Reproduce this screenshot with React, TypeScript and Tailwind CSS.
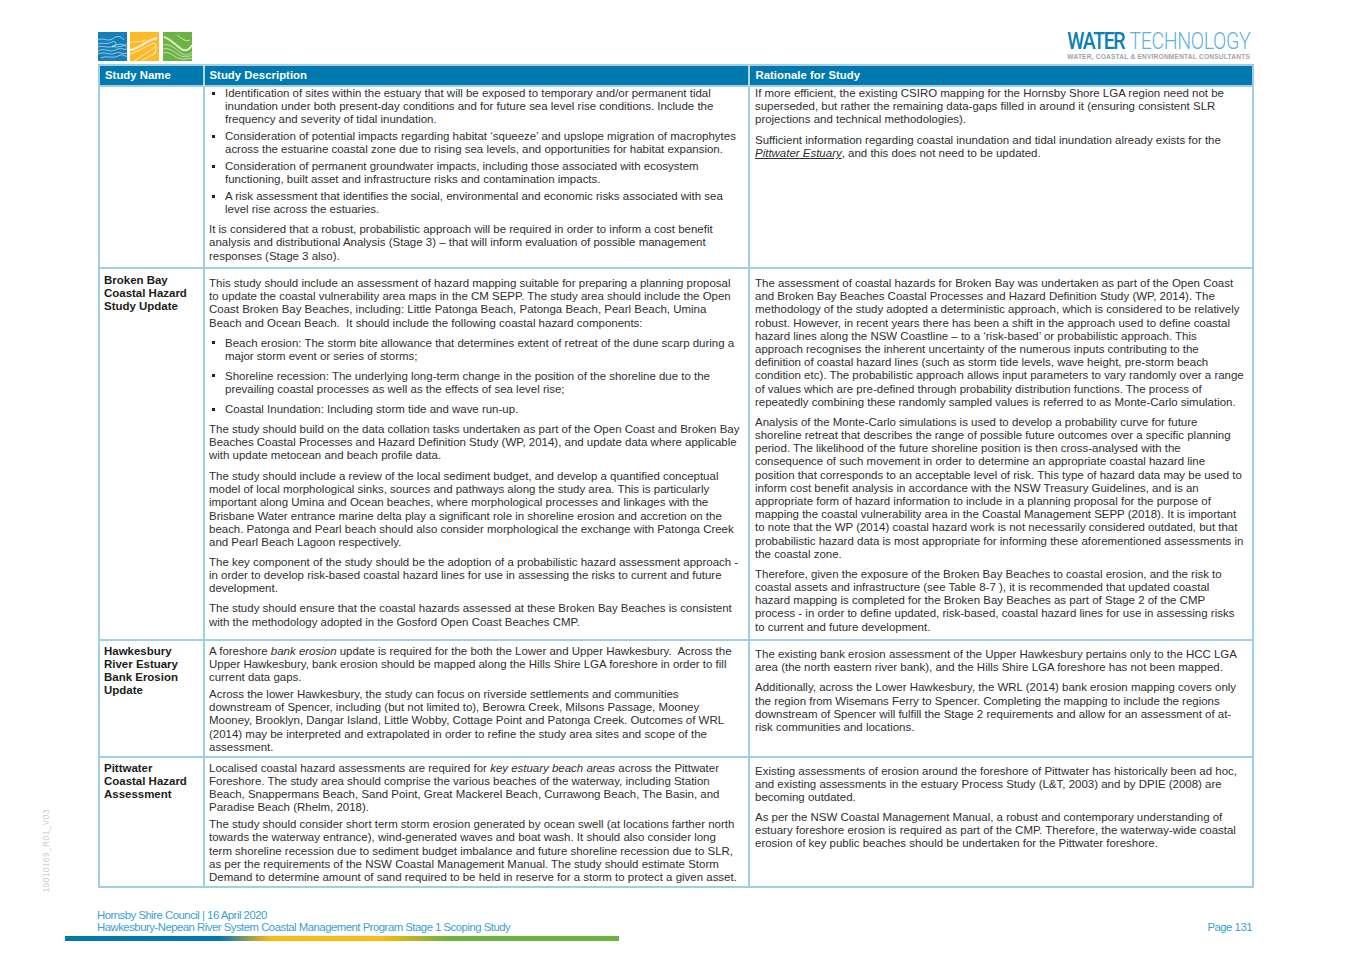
type Block = { lines: React.ReactNode[]; bullet?: boolean; gap?: string };

import React from "react";

const rows: { name: string[]; nameClass: string; descClass: string; ratClass: string; rowClass: string; desc: Block[]; rat: Block[] }[] = [
  {
    name: [],
    nameClass: "pt-[5px]",
    descClass: "pt-[0px]",
    ratClass: "pt-[0px]",
    rowClass: "h-[182px]",
    desc: [
      {
        bullet: true,
        lines: [
          "Identification of sites within the estuary that will be exposed to temporary and/or permanent tidal",
          "inundation under both present-day conditions and for future sea level rise conditions. Include the",
          "frequency and severity of tidal inundation.",
        ],
      },
      {
        bullet: true,
        gap: "mt-[3.6px]",
        lines: [
          "Consideration of potential impacts regarding habitat ‘squeeze’ and upslope migration of macrophytes",
          "across the estuarine coastal zone due to rising sea levels, and opportunities for habitat expansion.",
        ],
      },
      {
        bullet: true,
        gap: "mt-[3.4px]",
        lines: [
          "Consideration of permanent groundwater impacts, including those associated with ecosystem",
          "functioning, built asset and infrastructure risks and contamination impacts.",
        ],
      },
      {
        bullet: true,
        gap: "mt-[3.6px]",
        lines: [
          "A risk assessment that identifies the social, environmental and economic risks associated with sea",
          "level rise across the estuaries.",
        ],
      },
      {
        gap: "mt-[6.8px]",
        lines: [
          "It is considered that a robust, probabilistic approach will be required in order to inform a cost benefit",
          "analysis and distributional Analysis (Stage 3) – that will inform evaluation of possible management",
          "responses (Stage 3 also).",
        ],
      },
    ],
    rat: [
      {
        lines: [
          "If more efficient, the existing CSIRO mapping for the Hornsby Shore LGA region need not be",
          "superseded, but rather the remaining data-gaps filled in around it (ensuring consistent SLR",
          "projections and technical methodologies).",
        ],
      },
      {
        gap: "mt-[7.4px]",
        lines: [
          "Sufficient information regarding coastal inundation and tidal inundation already exists for the",
          <>
            <span className="italic underline">Pittwater Estuary</span>, and this does not need to be updated.
          </>,
        ],
      },
    ],
  },
  {
    name: ["Broken Bay", "Coastal Hazard", "Study Update"],
    nameClass: "pt-[4.6px]",
    descClass: "pt-[8px]",
    ratClass: "pt-[8px]",
    rowClass: "h-[372px]",
    desc: [
      {
        lines: [
          "This study should include an assessment of hazard mapping suitable for preparing a planning proposal",
          "to update the coastal vulnerability area maps in the CM SEPP. The study area should include the Open",
          "Coast Broken Bay Beaches, including: Little Patonga Beach, Patonga Beach, Pearl Beach, Umina",
          "Beach and Ocean Beach.  It should include the following coastal hazard components:",
        ],
      },
      {
        bullet: true,
        gap: "mt-[6.8px]",
        lines: [
          "Beach erosion: The storm bite allowance that determines extent of retreat of the dune scarp during a",
          "major storm event or series of storms;",
        ],
      },
      {
        bullet: true,
        gap: "mt-[6.8px]",
        lines: [
          "Shoreline recession: The underlying long-term change in the position of the shoreline due to the",
          "prevailing coastal processes as well as the effects of sea level rise;",
        ],
      },
      { bullet: true, gap: "mt-[6.8px]", lines: ["Coastal Inundation: Including storm tide and wave run-up."] },
      {
        gap: "mt-[6.8px]",
        lines: [
          "The study should build on the data collation tasks undertaken as part of the Open Coast and Broken Bay",
          "Beaches Coastal Processes and Hazard Definition Study (WP, 2014), and update data where applicable",
          "with update metocean and beach profile data.",
        ],
      },
      {
        gap: "mt-[7.4px]",
        lines: [
          "The study should include a review of the local sediment budget, and develop a quantified conceptual",
          "model of local morphological sinks, sources and pathways along the study area. This is particularly",
          "important along Umina and Ocean beaches, where morphological processes and linkages with the",
          "Brisbane Water entrance marine delta play a significant role in shoreline erosion and accretion on the",
          "beach. Patonga and Pearl beach should also consider morphological the exchange with Patonga Creek",
          "and Pearl Beach Lagoon respectively.",
        ],
      },
      {
        gap: "mt-[6.8px]",
        lines: [
          "The key component of the study should be the adoption of a probabilistic hazard assessment approach -",
          "in order to develop risk-based coastal hazard lines for use in assessing the risks to current and future",
          "development.",
        ],
      },
      {
        gap: "mt-[6.8px]",
        lines: [
          "The study should ensure that the coastal hazards assessed at these Broken Bay Beaches is consistent",
          "with the methodology adopted in the Gosford Open Coast Beaches CMP.",
        ],
      },
    ],
    rat: [
      {
        lines: [
          "The assessment of coastal hazards for Broken Bay was undertaken as part of the Open Coast",
          "and Broken Bay Beaches Coastal Processes and Hazard Definition Study (WP, 2014). The",
          "methodology of the study adopted a deterministic approach, which is considered to be relatively",
          "robust. However, in recent years there has been a shift in the approach used to define coastal",
          "hazard lines along the NSW Coastline – to a ‘risk-based’ or probabilistic approach. This",
          "approach recognises the inherent uncertainty of the numerous inputs contributing to the",
          "definition of coastal hazard lines (such as storm tide levels, wave height, pre-storm beach",
          "condition etc). The probabilistic approach allows input parameters to vary randomly over a range",
          "of values which are pre-defined through probability distribution functions. The process of",
          "repeatedly combining these randomly sampled values is referred to as Monte-Carlo simulation.",
        ],
      },
      {
        gap: "mt-[6.8px]",
        lines: [
          "Analysis of the Monte-Carlo simulations is used to develop a probability curve for future",
          "shoreline retreat that describes the range of possible future outcomes over a specific planning",
          "period. The likelihood of the future shoreline position is then cross-analysed with the",
          "consequence of such movement in order to determine an appropriate coastal hazard line",
          "position that corresponds to an acceptable level of risk. This type of hazard data may be used to",
          "inform cost benefit analysis in accordance with the NSW Treasury Guidelines, and is an",
          "appropriate form of hazard information to include in a planning proposal for the purpose of",
          "mapping the coastal vulnerability area in the Coastal Management SEPP (2018). It is important",
          "to note that the WP (2014) coastal hazard work is not necessarily considered outdated, but that",
          "probabilistic hazard data is most appropriate for informing these aforementioned assessments in",
          "the coastal zone.",
        ],
      },
      {
        gap: "mt-[6.8px]",
        lines: [
          "Therefore, given the exposure of the Broken Bay Beaches to coastal erosion, and the risk to",
          "coastal assets and infrastructure (see Table 8-7 ), it is recommended that updated coastal",
          "hazard mapping is completed for the Broken Bay Beaches as part of Stage 2 of the CMP",
          "process - in order to define updated, risk-based, coastal hazard lines for use in assessing risks",
          "to current and future development.",
        ],
      },
    ],
  },
  {
    name: ["Hawkesbury", "River Estuary", "Bank Erosion", "Update"],
    nameClass: "pt-[3.5px]",
    descClass: "pt-[3.5px]",
    ratClass: "pt-[6.5px]",
    rowClass: "h-[117px]",
    desc: [
      {
        lines: [
          <>
            A foreshore <span className="italic">bank erosion</span> update is required for the both the Lower and Upper Hawkesbury.  Across the
          </>,
          "Upper Hawkesbury, bank erosion should be mapped along the Hills Shire LGA foreshore in order to fill",
          "current data gaps.",
        ],
      },
      {
        gap: "mt-[3.8px]",
        lines: [
          "Across the lower Hawkesbury, the study can focus on riverside settlements and communities",
          "downstream of Spencer, including (but not limited to), Berowra Creek, Milsons Passage, Mooney",
          "Mooney, Brooklyn, Dangar Island, Little Wobby, Cottage Point and Patonga Creek. Outcomes of WRL",
          "(2014) may be interpreted and extrapolated in order to refine the study area sites and scope of the",
          "assessment.",
        ],
      },
    ],
    rat: [
      {
        lines: [
          "The existing bank erosion assessment of the Upper Hawkesbury pertains only to the HCC LGA",
          "area (the north eastern river bank), and the Hills Shire LGA foreshore has not been mapped.",
        ],
      },
      {
        gap: "mt-[7.4px]",
        lines: [
          "Additionally, across the Lower Hawkesbury, the WRL (2014) bank erosion mapping covers only",
          "the region from Wisemans Ferry to Spencer. Completing the mapping to include the regions",
          "downstream of Spencer will fulfill the Stage 2 requirements and allow for an assessment of at-",
          "risk communities and locations.",
        ],
      },
    ],
  },
  {
    name: ["Pittwater", "Coastal Hazard", "Assessment"],
    nameClass: "pt-[3.5px]",
    descClass: "pt-[3.5px]",
    ratClass: "pt-[6.5px]",
    rowClass: "h-[130px]",
    desc: [
      {
        lines: [
          <>
            Localised coastal hazard assessments are required for <span className="italic">key estuary beach areas</span> across the Pittwater
          </>,
          "Foreshore. The study area should comprise the various beaches of the waterway, including Station",
          "Beach, Snappermans Beach, Sand Point, Great Mackerel Beach, Currawong Beach, The Basin, and",
          "Paradise Beach (Rhelm, 2018).",
        ],
      },
      {
        gap: "mt-[3.8px]",
        lines: [
          "The study should consider short term storm erosion generated by ocean swell (at locations farther north",
          "towards the waterway entrance), wind-generated waves and boat wash. It should also consider long",
          "term shoreline recession due to sediment budget imbalance and future shoreline recession due to SLR,",
          "as per the requirements of the NSW Coastal Management Manual. The study should estimate Storm",
          "Demand to determine amount of sand required to be held in reserve for a storm to protect a given asset.",
        ],
      },
    ],
    rat: [
      {
        lines: [
          "Existing assessments of erosion around the foreshore of Pittwater has historically been ad hoc,",
          "and existing assessments in the estuary Process Study (L&T, 2003) and by DPIE (2008) are",
          "becoming outdated.",
        ],
      },
      {
        gap: "mt-[6.8px]",
        lines: [
          "As per the NSW Coastal Management Manual, a robust and contemporary understanding of",
          "estuary foreshore erosion is required as part of the CMP. Therefore, the waterway-wide coastal",
          "erosion of key public beaches should be undertaken for the Pittwater foreshore.",
        ],
      },
    ],
  },
];

function Paragraphs({ blocks }: { blocks: Block[] }) {
  return (
    <>
      {blocks.map((b, i) => (
        <div key={i} className={`flex ${b.gap ?? ""}`}>
          {b.bullet && (
            <div className="w-[16px] shrink-0 pl-[3px] pt-[4.5px]">
              <div className="h-[3px] w-[3px] bg-[#222]" />
            </div>
          )}
          <div>
            {b.lines.map((line, j) => (
              <div key={j} className="whitespace-pre">
                {line}
              </div>
            ))}
          </div>
        </div>
      ))}
    </>
  );
}

function LogoTiles() {
  return (
    <svg width="94" height="29" viewBox="0 0 94 29" className="block">
      <rect x="0" y="0" width="29" height="29" fill="#1580b8" />
      <g fill="none" stroke="#fff" strokeOpacity="0.7" strokeWidth="0.8">
        <path d="M0 8 C5 5 9 10 14 7 S22 3 26 8" />
        <path d="M0 12 C5 10 9 13 14 10 C18 8 20 13 15 14 S24 16 29 12" />
        <path d="M0 15 C6 13 10 17 16 14 S25 12 29 15" />
        <path d="M0 19 C6 15 11 21 17 18 S25 18 29 17" />
        <path d="M0 22 C7 19 12 24 18 21 C22 19 25 23 29 21" />
        <path d="M3 26 C9 23 14 27 20 24 S26 25 29 24" />
      </g>
      <rect x="32" y="0" width="29" height="29" fill="#fdb927" />
      <g transform="translate(32 0)" fill="none" stroke="#fff" strokeOpacity="0.85" strokeWidth="0.8">
        <path d="M0 18 C8 17 14 11 21 8 L27 6" strokeWidth="2" />
        <path d="M0 22 C8 20 16 14 24 11 C27 13 27 20 22 24" />
        <path d="M0 11 C5 8 10 11 15 8" />
        <path d="M4 29 C12 24 18 20 25 15" />
        <path d="M11 29 C17 26 22 23 26 20" />
      </g>
      <rect x="65" y="0" width="29" height="29" fill="#6db344" />
      <g transform="translate(65 0)" fill="none" stroke="#fff" strokeOpacity="0.75" strokeWidth="0.8">
        <path d="M1 5 C8 7 14 15 20 18 C24 19 27 17 29 13" strokeWidth="2" />
        <path d="M0 13 C7 11 12 17 18 21 S26 22 29 20" />
        <path d="M0 17 C6 15 11 20 16 23 S25 25 29 23" />
        <path d="M0 21 C6 19 10 24 15 26 S24 27 29 26" />
        <path d="M14 3 C19 7 23 10 27 8" />
      </g>
    </svg>
  );
}

export default function App() {
  return (
    <div className="flex h-[966px] w-[1366px] overflow-hidden bg-white font-['Liberation_Sans',Arial,sans-serif] text-[#2f2f2f]">
      <div className="flex w-[98px] shrink-0 items-end justify-center pb-[73px] pr-[6px]">
        <div className="rotate-180 text-[8.5px] leading-none tracking-[0.35px] text-[#cdcdcd] [writing-mode:vertical-rl]">
          19010169_R01_V03
        </div>
      </div>

      <div className="flex w-[1155px] shrink-0 flex-col pt-[32px]">
        <div className="flex h-[32px] items-start justify-between">
          <LogoTiles />
          <div className="flex flex-col items-end pr-[3px]">
            <div className="flex h-[19px] origin-right scale-x-[0.85] items-center whitespace-nowrap font-['Roboto',sans-serif] text-[23px] leading-none">
              <span className="font-medium tracking-[-1.6px] text-[#0b7fb6]">WATER</span>
              <span className="ml-[6px] font-light tracking-[-0.43px] text-[#5fb2dd]">TECHNOLOGY</span>
            </div>
            <div className="mt-[2px] whitespace-nowrap text-[6.6px] font-bold leading-[7px] tracking-[0.2px] text-[#a3a3a3]">
              WATER, COASTAL &amp; ENVIRONMENTAL CONSULTANTS
            </div>
          </div>
        </div>

        <table className="w-[1154px] table-fixed border-collapse border-2 border-[#9fcfe6] text-[11.48px] leading-[13.2px]">
          <colgroup>
            <col className="w-[104.5px]" />
            <col className="w-[545px]" />
            <col className="w-[504.5px]" />
          </colgroup>
          <thead>
            <tr className="h-[21px] bg-[#0079ae] text-left text-[11.3px] font-bold tracking-[0.05px] text-white">
              <th className="border-r-2 border-[#b5d9ec] pl-[5px] font-bold">Study Name</th>
              <th className="border-r-2 border-[#b5d9ec] pl-[5px] font-bold">Study Description</th>
              <th className="pl-[6px] font-bold">Rationale for Study</th>
            </tr>
          </thead>
          <tbody>
            {rows.map((row, i) => (
              <tr key={i} className={`${row.rowClass} border-t-2 border-[#9fcfe6] align-top`}>
                <td className={`border-r-2 border-[#9fcfe6] pl-[4px] font-bold text-[#1c1c1c] ${row.nameClass}`}>
                  {row.name.map((n) => (
                    <div key={n}>{n}</div>
                  ))}
                </td>
                <td className={`border-r-2 border-[#9fcfe6] pl-[4.5px] ${row.descClass}`}>
                  <Paragraphs blocks={row.desc} />
                </td>
                <td className={`pl-[5.5px] ${row.ratClass}`}>
                  <Paragraphs blocks={row.rat} />
                </td>
              </tr>
            ))}
          </tbody>
        </table>

        <div className="mt-[21px] flex items-end justify-between text-[11.35px] leading-[12.4px] tracking-[-0.5px] text-[#3a9fd0]">
          <div className="-ml-px">
            <div>Hornsby Shire Council | 16 April 2020</div>
            <div>Hawkesbury-Nepean River System Coastal Management Program Stage 1 Scoping Study</div>
          </div>
          <div className="pr-px">Page 131</div>
        </div>
        <div className="-ml-[33px] mt-[2px] h-[5px] w-[554px] bg-[linear-gradient(to_right,#0079ae_28%,#fdb913_37%,#fdb913_57%,#6cb33f_69%)]" />
      </div>
    </div>
  );
}
